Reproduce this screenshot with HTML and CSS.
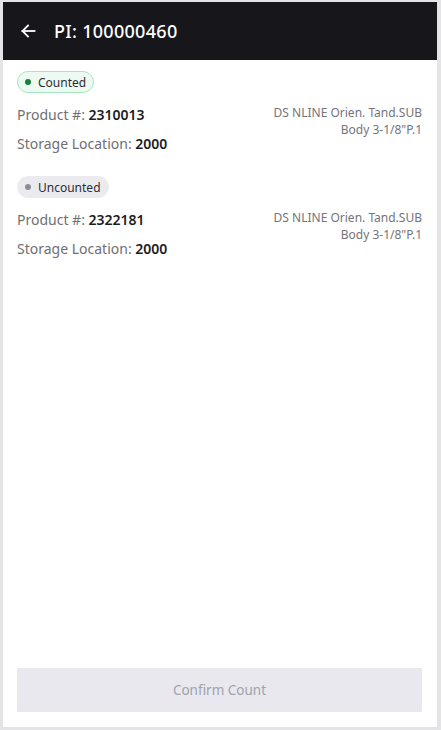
FILE: index.html
```html
<!DOCTYPE html>
<html>
<head>
<meta charset="utf-8">
<link rel="stylesheet" href="styles.css">
</head>
<body>
<div class="app">
  <header class="topbar">
    <svg class="back" width="16" height="16" viewBox="0 0 16 16" fill="none" stroke="#fff" stroke-width="1.8" stroke-linecap="square">
      <path d="M2.5 8H14.5"/>
      <path d="M8 2.5L2.5 8L8 13.5"/>
    </svg>
    <h1 class="title">PI: 100000460</h1>
  </header>
  <main class="content">
    <section class="item">
      <span class="tag tag-counted"><span class="dot"></span>Counted</span>
      <div class="row">
        <div class="fields">
          <div class="field">Product #: <b>2310013</b></div>
          <div class="field">Storage Location: <b>2000</b></div>
        </div>
        <div class="desc">DS NLINE Orien. Tand.SUB<br>Body 3-1/8"P.1</div>
      </div>
    </section>
    <section class="item">
      <span class="tag tag-uncounted"><span class="dot"></span>Uncounted</span>
      <div class="row">
        <div class="fields">
          <div class="field">Product #: <b>2322181</b></div>
          <div class="field">Storage Location: <b>2000</b></div>
        </div>
        <div class="desc">DS NLINE Orien. Tand.SUB<br>Body 3-1/8"P.1</div>
      </div>
    </section>
    <button class="confirm" disabled>Confirm Count</button>
  </main>
</div>
</body>
</html>
```
FILE: styles.css
```css
* { box-sizing: border-box; }
html, body {
  margin: 0;
  padding: 0;
  background: #e4e4e6;
  font-family: "Noto Sans", "Liberation Sans", sans-serif;
}
.app {
  margin: 2px 4px 3px 3px;
  height: 725px;
  background: #fff;
  display: flex;
  flex-direction: column;
}
.topbar {
  height: 58px;
  background: #17171b;
  display: flex;
  align-items: center;
  padding-left: 17px;
  flex-shrink: 0;
}
.back { display: block; }
.title {
  margin: 0 0 0 18px;
  color: #fff;
  font-size: 18px;
  font-weight: 500;
  letter-spacing: 0.3px;
}
.content {
  flex: 1;
  display: flex;
  flex-direction: column;
  padding: 11px 15px 15px 14px;
}
.item {
  display: flex;
  flex-direction: column;
  align-items: flex-start;
  margin-bottom: 18px;
}
.tag {
  display: inline-flex;
  align-items: center;
  height: 22px;
  padding: 0 7px 0 7px;
  border-radius: 11px;
  font-size: 12px;
  color: #2d2d33;
  margin-bottom: 7px;
}
.dot {
  width: 6px;
  height: 6px;
  border-radius: 50%;
  margin-right: 7px;
}
.tag-counted {
  background: #edfaf2;
  border: 1px solid #a7e6c0;
}
.tag-counted .dot { background: #198038; }
.tag-uncounted {
  background: #ebebef;
  border: 1px solid #ebebef;
}
.tag-uncounted .dot { background: #8d8d95; }
.row {
  display: flex;
  justify-content: space-between;
  width: 100%;
}
.field {
  font-size: 14px;
  line-height: 29px;
  color: #6f6f74;
}
.field b {
  color: #1c1c1f;
  font-weight: 600;
}
.desc {
  margin-top: 4px;
  text-align: right;
  font-size: 12px;
  line-height: 17px;
  color: #74747a;
}
.confirm {
  margin-top: auto;
  width: 100%;
  height: 44px;
  border: none;
  background: #e8e8ee;
  color: #a2a2ac;
  font-family: inherit;
  font-size: 13.5px;
}
```
